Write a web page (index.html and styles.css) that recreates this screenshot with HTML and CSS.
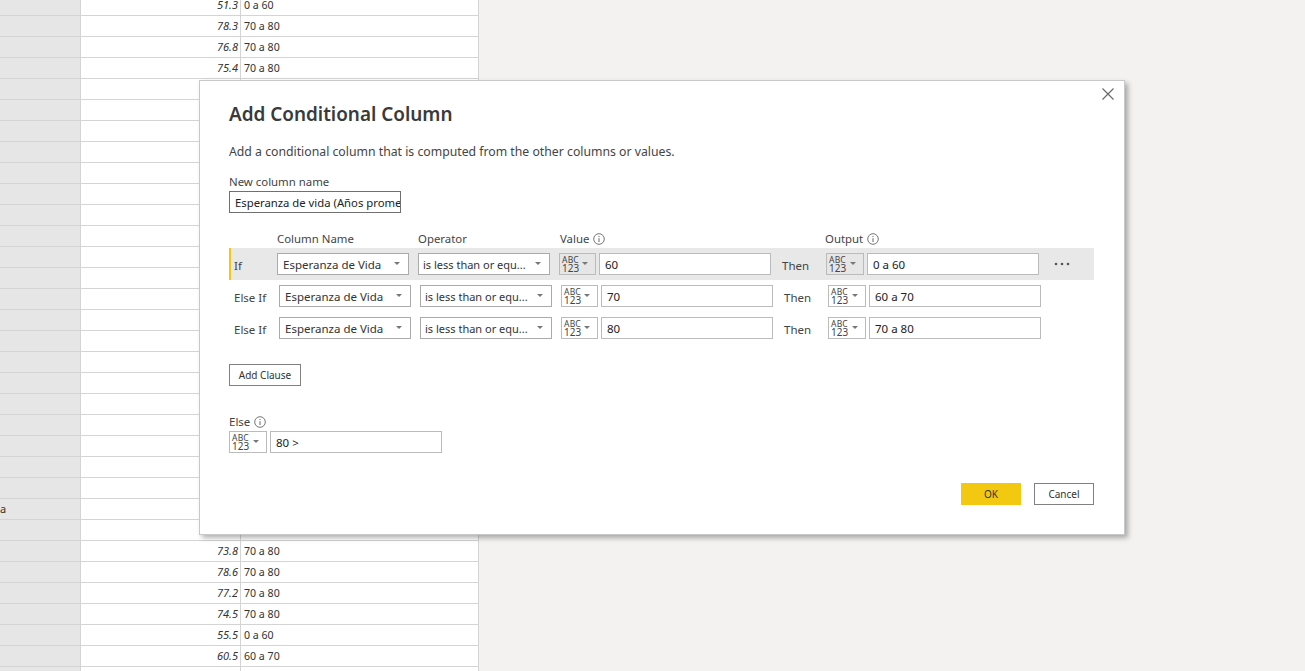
FILE: index.html
```html
<!DOCTYPE html>
<html lang="en">
<head>
  <meta charset="UTF-8">
  <meta name="viewport" content="width=device-width, initial-scale=1.0">
  <title>Add Conditional Column</title>
  <link rel="stylesheet" href="styles.css">
</head>
<body>

  <svg class="defs" width="0" height="0">
    <symbol id="info" viewBox="0 0 12 12">
      <circle cx="6" cy="6" r="5.3" fill="none" stroke="#666" stroke-width="0.9"/>
      <path d="M6 5.2V9M6 3v1.1" fill="none" stroke="#666" stroke-width="1"/>
    </symbol>
  </svg>

  <div class="grid">
    <div class="row"><div></div><div class="num">51.3</div><div class="txt">0 a 60</div></div>
    <div class="row"><div></div><div class="num">78.3</div><div class="txt">70 a 80</div></div>
    <div class="row"><div></div><div class="num">76.8</div><div class="txt">70 a 80</div></div>
    <div class="row"><div></div><div class="num">75.4</div><div class="txt">70 a 80</div></div>
    <div class="row"><div></div><div></div><div></div></div>
    <div class="row"><div></div><div></div><div></div></div>
    <div class="row"><div></div><div></div><div></div></div>
    <div class="row"><div></div><div></div><div></div></div>
    <div class="row"><div></div><div></div><div></div></div>
    <div class="row"><div></div><div></div><div></div></div>
    <div class="row"><div></div><div></div><div></div></div>
    <div class="row"><div></div><div></div><div></div></div>
    <div class="row"><div></div><div></div><div></div></div>
    <div class="row"><div></div><div></div><div></div></div>
    <div class="row"><div></div><div></div><div></div></div>
    <div class="row"><div></div><div></div><div></div></div>
    <div class="row"><div></div><div></div><div></div></div>
    <div class="row"><div></div><div></div><div></div></div>
    <div class="row"><div></div><div></div><div></div></div>
    <div class="row"><div></div><div></div><div></div></div>
    <div class="row"><div></div><div></div><div></div></div>
    <div class="row"><div></div><div></div><div></div></div>
    <div class="row"><div></div><div></div><div></div></div>
    <div class="row"><div></div><div></div><div></div></div>
    <div class="row"><div class="name">a</div><div></div><div></div></div>
    <div class="row"><div></div><div></div><div></div></div>
    <div class="row"><div></div><div class="num">73.8</div><div class="txt">70 a 80</div></div>
    <div class="row"><div></div><div class="num">78.6</div><div class="txt">70 a 80</div></div>
    <div class="row"><div></div><div class="num">77.2</div><div class="txt">70 a 80</div></div>
    <div class="row"><div></div><div class="num">74.5</div><div class="txt">70 a 80</div></div>
    <div class="row"><div></div><div class="num">55.5</div><div class="txt">0 a 60</div></div>
    <div class="row"><div></div><div class="num">60.5</div><div class="txt">60 a 70</div></div>
    <div class="row"><div></div><div></div><div></div></div>
  </div>

  <div class="dialog">
    <svg class="close" width="12" height="12" viewBox="0 0 12 12">
      <path d="M.5.5l11 11M11.5.5l-11 11" fill="none" stroke="#666" stroke-width="1.1"/>
    </svg>

    <h2>Add Conditional Column</h2>
    <p class="desc">Add a conditional column that is computed from the other columns or values.</p>

    <label class="name-label">New column name</label>
    <div class="name-input">Esperanza de vida (Años promedio)</div>

    <div class="heads">
      <span class="h-col">Column Name</span>
      <span class="h-op">Operator</span>
      <span class="h-val">Value <svg class="info"><use href="#info"/></svg></span>
      <span class="h-out">Output <svg class="info"><use href="#info"/></svg></span>
    </div>

    <div class="clause active">
      <span class="cond">If</span>
      <div class="select"><span>Esperanza de Vida</span><i class="caret"></i></div>
      <div class="select op"><span>is less than or equ...</span><i class="caret"></i></div>
      <div class="type"><div class="abc"><b>ABC</b><b class="n">123</b></div><i class="caret"></i></div>
      <div class="field">60</div>
      <span class="then">Then</span>
      <div class="type"><div class="abc"><b>ABC</b><b class="n">123</b></div><i class="caret"></i></div>
      <div class="field">0 a 60</div>
      <svg class="dots" width="16" height="4" viewBox="0 0 16 4">
        <circle cx="2" cy="2" r="1.3"/><circle cx="8" cy="2" r="1.3"/><circle cx="14" cy="2" r="1.3"/>
      </svg>
    </div>

    <div class="clause">
      <span class="cond">Else If</span>
      <div class="select"><span>Esperanza de Vida</span><i class="caret"></i></div>
      <div class="select op"><span>is less than or equ...</span><i class="caret"></i></div>
      <div class="type"><div class="abc"><b>ABC</b><b class="n">123</b></div><i class="caret"></i></div>
      <div class="field">70</div>
      <span class="then">Then</span>
      <div class="type"><div class="abc"><b>ABC</b><b class="n">123</b></div><i class="caret"></i></div>
      <div class="field">60 a 70</div>
    </div>

    <div class="clause">
      <span class="cond">Else If</span>
      <div class="select"><span>Esperanza de Vida</span><i class="caret"></i></div>
      <div class="select op"><span>is less than or equ...</span><i class="caret"></i></div>
      <div class="type"><div class="abc"><b>ABC</b><b class="n">123</b></div><i class="caret"></i></div>
      <div class="field">80</div>
      <span class="then">Then</span>
      <div class="type"><div class="abc"><b>ABC</b><b class="n">123</b></div><i class="caret"></i></div>
      <div class="field">70 a 80</div>
    </div>

    <button class="add">Add Clause</button>

    <div class="else-label">Else <svg class="info"><use href="#info"/></svg></div>
    <div class="else-row">
      <div class="type"><div class="abc"><b>ABC</b><b class="n">123</b></div><i class="caret"></i></div>
      <div class="field">80 &gt;</div>
    </div>

    <div class="actions">
      <button class="ok">OK</button>
      <button class="cancel">Cancel</button>
    </div>
  </div>

</body>
</html>
```

FILE: styles.css
```css
html, body {
  height: 100%;
}
body {
  margin: 0;
  overflow: hidden;
  background-color: #f3f2f1;
  font-family: "Noto Sans", Arial, sans-serif;
  font-size: 11.5px;
  color: #333;
}
.defs {
  position: absolute;
}

/* data grid behind the dialog */
.grid {
  margin-top: -5px;
  width: 479px;
}
.row {
  display: grid;
  grid-template-columns: 81px 160px 238px;
  height: 21px;
  box-sizing: border-box;
  background-color: white;
  border-bottom: 1px solid #d4d4d4;
  font-size: 11px;
  line-height: 20px;
}
.row > div {
  border-right: 1px solid #d4d4d4;
  white-space: nowrap;
  overflow: hidden;
}
.row > div:first-child {
  background-color: #e6e6e6;
}
.num {
  text-align: right;
  font-style: italic;
  padding-right: 2px;
}
.txt {
  padding-left: 3px;
  font-size: 10.6px;
}

/* dialog */
.dialog {
  position: absolute;
  left: 199px;
  top: 80px;
  width: 926px;
  height: 455px;
  box-sizing: border-box;
  background-color: white;
  border: 1px solid #c8c8c8;
  box-shadow: 3px 3px 5px rgba(0, 0, 0, 0.3);
  padding: 0 0 0 29px;
}
.close {
  position: absolute;
  right: 10px;
  top: 7px;
}
h2 {
  margin: 20px 0 0;
  font-size: 18.9px;
  line-height: 26px;
  font-weight: 600;
  color: #3a3a3a;
}
.desc {
  margin: 16px 0 0;
  font-size: 12.25px;
  line-height: 18px;
  color: #444;
}
.name-label {
  display: block;
  margin-top: 13px;
  font-size: 11.4px;
  line-height: 16px;
  color: #444;
}
.name-input {
  width: 172px;
  height: 22px;
  margin-top: 1px;
  box-sizing: border-box;
  border: 1px solid #707070;
  padding-left: 5px;
  font-size: 11.3px;
  line-height: 22px;
  color: #222;
  white-space: nowrap;
  overflow: hidden;
}
.heads {
  position: relative;
  height: 16px;
  margin-top: 18px;
  font-size: 11.4px;
  line-height: 16px;
  color: #444;
}
.heads span {
  position: absolute;
  top: 0;
}
.h-col { left: 48px; }
.h-op { left: 189px; }
.h-val { left: 331px; }
.h-out { left: 596px; }
.info {
  width: 12px;
  height: 12px;
  margin-left: 1px;
  vertical-align: -2px;
}

.clause {
  display: flex;
  align-items: center;
  width: 865px;
  height: 32px;
  box-sizing: border-box;
  padding-left: 50px;
  position: relative;
}
.clause.active {
  margin-top: 1px;
  background-color: #e8e8e8;
  border-left: 2px solid #f2c811;
  padding-left: 46px;
}
.cond {
  position: absolute;
  left: 5px;
  top: 9px;
  line-height: 18px;
  color: #444;
}
.clause.active .cond {
  left: 3px;
}
.select, .type, .field {
  height: 22px;
  box-sizing: border-box;
  background-color: white;
  border: 1px solid #bbb;
  line-height: 20px;
}
.select {
  display: flex;
  align-items: center;
  justify-content: space-between;
  width: 132px;
  margin-right: 9px;
  padding: 0 8px 0 5px;
  border-color: #aaa;
  white-space: nowrap;
}
.select span {
  margin-top: 2px;
}
.select.op {
  padding-left: 4px;
  font-size: 11px;
}
.type {
  display: flex;
  align-items: center;
  justify-content: space-between;
  flex: none;
  width: 37px;
  margin-right: 3px;
  padding: 0 7px 0 2px;
}
.then + .type {
  width: 38px;
}
.clause.active .type {
  background-color: #e6e6e6;
}
.abc {
  display: flex;
  flex-direction: column;
  color: #444;
}
.abc b {
  font-weight: 400;
  font-size: 8.5px;
  line-height: 8px;
  letter-spacing: 0.2px;
}
.abc b.n {
  font-size: 10px;
  line-height: 9px;
  letter-spacing: 0;
}
.caret {
  width: 0;
  height: 0;
  margin-bottom: 2px;
  border-left: 3px solid transparent;
  border-right: 3px solid transparent;
  border-top: 3px solid #777;
}
.field {
  flex: none;
  width: 172px;
  padding-left: 5px;
  line-height: 22px;
  color: #222;
}
.then {
  flex: none;
  width: 55px;
  padding-left: 11px;
  box-sizing: border-box;
  margin-top: 2px;
  color: #444;
}
.dots {
  margin-left: 15px;
  fill: #555;
}

.add {
  display: block;
  width: 72px;
  height: 22px;
  margin-top: 20px;
  padding: 0;
  box-sizing: border-box;
  background-color: white;
  border: 1px solid #808080;
  font-family: inherit;
  font-size: 10px;
  color: #333;
}
.else-label {
  margin-top: 28px;
  line-height: 16px;
  color: #444;
}
.else-row {
  display: flex;
  margin-top: 1px;
}
.else-row .type {
  width: 38px;
}

.actions {
  display: flex;
  justify-content: flex-end;
  gap: 13px;
  width: 865px;
  margin-top: 30px;
}
.actions button {
  width: 60px;
  height: 22px;
  padding: 0;
  box-sizing: border-box;
  font-family: inherit;
  font-size: 10px;
  color: #333;
  background-color: white;
  border: 1px solid #808080;
}
.actions .ok {
  background-color: #f2c811;
  border-color: #f2c811;
}
```
